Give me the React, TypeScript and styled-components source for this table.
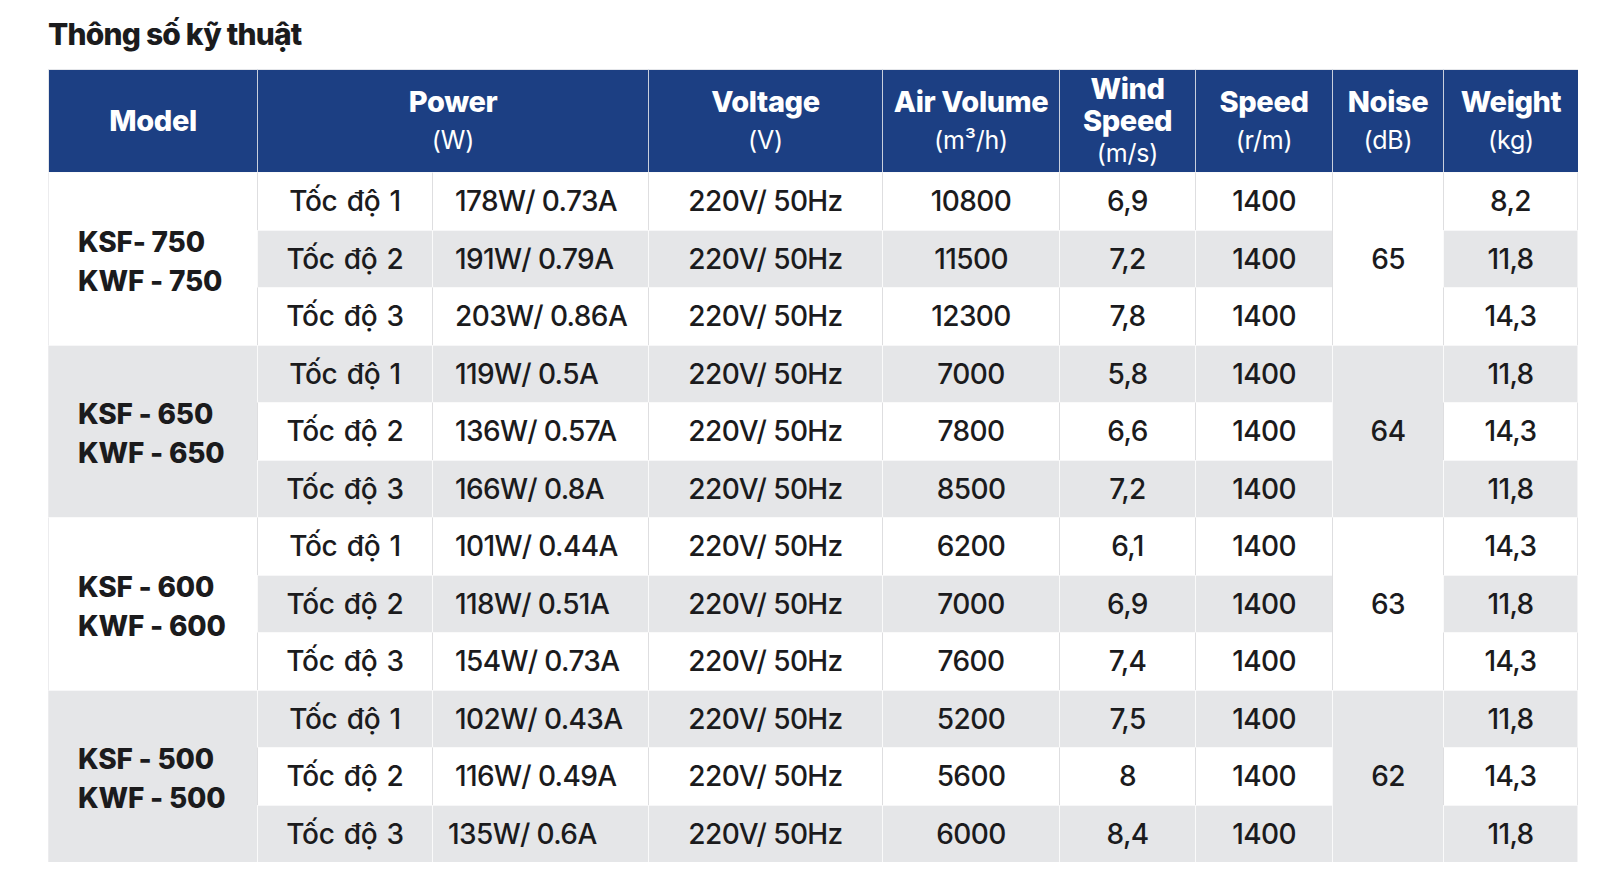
import React from "react";
import styled, { createGlobalStyle } from "styled-components";

const GlobalStyle = createGlobalStyle`
  html, body { margin: 0; padding: 0; background: #ffffff; }
  body { font-family: "Inter", "Noto Sans", sans-serif; color: #1b1b1d; }
`;

const Page = styled.div`
  padding: 16px 23px 0 48px;
`;

const Title = styled.h2`
  margin: 0 0 17px 0;
  font-size: 30px;
  line-height: 36px;
  font-weight: 800;
  letter-spacing: -0.8px;
  color: #1b1b1d;
`;

const Table = styled.table`
  width: 1530px;
  table-layout: fixed;
  border-collapse: separate;
  border-spacing: 0;
`;

const HeadRow = styled.tr`
  height: 103px;
`;

const HeadCell = styled.th<{ $first?: boolean }>`
  background: #1c3f83;
  color: #ffffff;
  padding: 0;
  text-align: center;
  vertical-align: middle;
  border-left: 1px solid ${(p) => (p.$first ? "#e4e6ea" : "#c8cfdd")};
  border-top: 1px solid #e4e6ea;
`;

const HeadMain = styled.div<{ $lh?: number }>`
  font-size: 29px;
  font-weight: 800;
  letter-spacing: -0.4px;
  line-height: ${(p) => p.$lh ?? 38}px;
  white-space: nowrap;
`;

const HeadSub = styled.div<{ $lh?: number }>`
  font-size: 25px;
  font-weight: 400;
  letter-spacing: -0.2px;
  line-height: ${(p) => p.$lh ?? 38}px;
  white-space: nowrap;
`;

const BodyRow = styled.tr`
  height: 57.5px;
`;

const Cell = styled.td<{
  $grey: boolean;
  $align?: "left" | "center";
  $pad?: number;
  $last?: boolean;
  $first?: boolean;
}>`
  background: ${(p) => (p.$grey ? "#e5e6e8" : "#ffffff")};
  padding: 0 0 0 ${(p) => p.$pad ?? 0}px;
  text-align: ${(p) => p.$align ?? "center"};
  vertical-align: middle;
  font-size: 28px;
  font-weight: 500;
  letter-spacing: -0.6px;
  line-height: 34px;
  white-space: nowrap;
  color: #1b1b1d;
  border-top: 1px solid ${(p) => (p.$grey ? "#f7f7f8" : "#fafafa")};
  border-left: 1px solid
    ${(p) => (p.$first ? "#ececee" : p.$grey ? "#fafafa" : "#dedee0")};
  border-right: ${(p) => (p.$last ? `1px solid ${p.$grey ? "#f3f3f4" : "#e4e4e6"}` : "none")};
`;

const SpeedLabel = styled(Cell)`
  word-spacing: 2px;
  letter-spacing: -0.3px;
`;

const ModelCell = styled(Cell)`
  font-weight: 800;
  letter-spacing: -0.2px;
  line-height: 39px;
  padding-top: 6px;
`;

type Row = [string, string, string, string, string, string, string];

interface Group {
  model: [string, string];
  noise: string;
  rows: Row[];
  powerPad?: number[];
}

const groups: Group[] = [
  {
    model: ["KSF- 750", "KWF - 750"],
    noise: "65",
    rows: [
      ["Tốc độ 1", "178W/ 0.73A", "220V/ 50Hz", "10800", "6,9", "1400", "8,2"],
      ["Tốc độ 2", "191W/ 0.79A", "220V/ 50Hz", "11500", "7,2", "1400", "11,8"],
      ["Tốc độ 3", "203W/ 0.86A", "220V/ 50Hz", "12300", "7,8", "1400", "14,3"],
    ],
  },
  {
    model: ["KSF - 650", "KWF - 650"],
    noise: "64",
    rows: [
      ["Tốc độ 1", "119W/ 0.5A", "220V/ 50Hz", "7000", "5,8", "1400", "11,8"],
      ["Tốc độ 2", "136W/ 0.57A", "220V/ 50Hz", "7800", "6,6", "1400", "14,3"],
      ["Tốc độ 3", "166W/ 0.8A", "220V/ 50Hz", "8500", "7,2", "1400", "11,8"],
    ],
  },
  {
    model: ["KSF - 600", "KWF - 600"],
    noise: "63",
    rows: [
      ["Tốc độ 1", "101W/ 0.44A", "220V/ 50Hz", "6200", "6,1", "1400", "14,3"],
      ["Tốc độ 2", "118W/ 0.51A", "220V/ 50Hz", "7000", "6,9", "1400", "11,8"],
      ["Tốc độ 3", "154W/ 0.73A", "220V/ 50Hz", "7600", "7,4", "1400", "14,3"],
    ],
  },
  {
    model: ["KSF - 500", "KWF - 500"],
    noise: "62",
    rows: [
      ["Tốc độ 1", "102W/ 0.43A", "220V/ 50Hz", "5200", "7,5", "1400", "11,8"],
      ["Tốc độ 2", "116W/ 0.49A", "220V/ 50Hz", "5600", "8", "1400", "14,3"],
      ["Tốc độ 3", "135W/ 0.6A", "220V/ 50Hz", "6000", "8,4", "1400", "11,8"],
    ],
    powerPad: [22, 22, 15],
  },
];

const colWidths = [209, 175, 216, 234, 177, 136, 137, 111, 135];

export default function App() {
  let rowIndex = 0;
  return (
    <>
      <GlobalStyle />
      <Page>
        <Title>Thông số kỹ thuật</Title>
        <Table>
          <colgroup>
            {colWidths.map((w, i) => (
              <col key={i} style={{ width: w }} />
            ))}
          </colgroup>
          <thead>
            <HeadRow>
              <HeadCell $first>
                <HeadMain>Model</HeadMain>
              </HeadCell>
              <HeadCell colSpan={2}>
                <HeadMain>Power</HeadMain>
                <HeadSub>(W)</HeadSub>
              </HeadCell>
              <HeadCell>
                <HeadMain>Voltage</HeadMain>
                <HeadSub>(V)</HeadSub>
              </HeadCell>
              <HeadCell>
                <HeadMain>Air Volume</HeadMain>
                <HeadSub>(m³/h)</HeadSub>
              </HeadCell>
              <HeadCell>
                <HeadMain $lh={32}>Wind</HeadMain>
                <HeadMain $lh={32}>Speed</HeadMain>
                <HeadSub $lh={32}>(m/s)</HeadSub>
              </HeadCell>
              <HeadCell>
                <HeadMain>Speed</HeadMain>
                <HeadSub>(r/m)</HeadSub>
              </HeadCell>
              <HeadCell>
                <HeadMain>Noise</HeadMain>
                <HeadSub>(dB)</HeadSub>
              </HeadCell>
              <HeadCell>
                <HeadMain>Weight</HeadMain>
                <HeadSub>(kg)</HeadSub>
              </HeadCell>
            </HeadRow>
          </thead>
          <tbody>
            {groups.map((g, gi) =>
              g.rows.map((r, ri) => {
                rowIndex += 1;
                const grey = rowIndex % 2 === 0;
                const groupGrey = gi % 2 === 1;
                return (
                  <BodyRow key={`${gi}-${ri}`}>
                    {ri === 0 && (
                      <ModelCell rowSpan={3} $grey={groupGrey} $align="left" $pad={29} $first>
                        {g.model[0]}
                        <br />
                        {g.model[1]}
                      </ModelCell>
                    )}
                    <SpeedLabel $grey={grey}>{r[0]}</SpeedLabel>
                    <Cell $grey={grey} $align="left" $pad={g.powerPad ? g.powerPad[ri] : 22}>
                      {r[1]}
                    </Cell>
                    <Cell $grey={grey}>{r[2]}</Cell>
                    <Cell $grey={grey}>{r[3]}</Cell>
                    <Cell $grey={grey}>{r[4]}</Cell>
                    <Cell $grey={grey}>{r[5]}</Cell>
                    {ri === 0 && (
                      <Cell rowSpan={3} $grey={groupGrey}>
                        {g.noise}
                      </Cell>
                    )}
                    <Cell $grey={grey} $last>
                      {r[6]}
                    </Cell>
                  </BodyRow>
                );
              })
            )}
          </tbody>
        </Table>
      </Page>
    </>
  );
}
